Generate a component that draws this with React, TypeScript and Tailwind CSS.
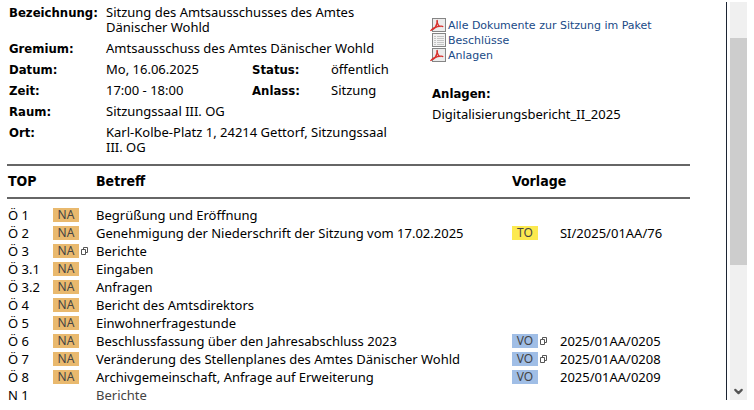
import { ChevronDown } from 'lucide-react';

type BadgeKind = 'NA' | 'TO' | 'VO';

type AgendaItem = {
    top: string;
    betreff: string;
    action?: BadgeKind;
    actionMore?: boolean;
    vorlageKind?: BadgeKind;
    vorlageMore?: boolean;
    vorlage?: string;
    closed?: boolean;
};

const agenda: AgendaItem[] = [
    { top: 'Ö 1', action: 'NA', betreff: 'Begrüßung und Eröffnung' },
    {
        top: 'Ö 2',
        action: 'NA',
        betreff: 'Genehmigung der Niederschrift der Sitzung vom 17.02.2025',
        vorlageKind: 'TO',
        vorlage: 'SI/2025/01AA/76',
    },
    { top: 'Ö 3', action: 'NA', actionMore: true, betreff: 'Berichte' },
    { top: 'Ö 3.1', action: 'NA', betreff: 'Eingaben' },
    { top: 'Ö 3.2', action: 'NA', betreff: 'Anfragen' },
    { top: 'Ö 4', action: 'NA', betreff: 'Bericht des Amtsdirektors' },
    { top: 'Ö 5', action: 'NA', betreff: 'Einwohnerfragestunde' },
    {
        top: 'Ö 6',
        action: 'NA',
        betreff: 'Beschlussfassung über den Jahresabschluss 2023',
        vorlageKind: 'VO',
        vorlageMore: true,
        vorlage: '2025/01AA/0205',
    },
    {
        top: 'Ö 7',
        action: 'NA',
        betreff: 'Veränderung des Stellenplanes des Amtes Dänischer Wohld',
        vorlageKind: 'VO',
        vorlageMore: true,
        vorlage: '2025/01AA/0208',
    },
    {
        top: 'Ö 8',
        action: 'NA',
        betreff: 'Archivgemeinschaft, Anfrage auf Erweiterung',
        vorlageKind: 'VO',
        vorlage: '2025/01AA/0209',
    },
    { top: 'N 1', betreff: 'Berichte', closed: true },
];

const badgeColors: Record<BadgeKind, string> = {
    NA: 'bg-[#e9b96e]',
    TO: 'bg-[#fce94f]',
    VO: 'bg-[#a0bee6]',
};

const PdfIcon = () => (
    <svg width="16" height="15" viewBox="0 0 16 15" aria-hidden="true">
        <rect x="2.5" y="0.5" width="13" height="13" fill="#ececec" stroke="#858585" />
        <path
            d="M7 2C7.6 4 7.2 6.5 5.5 9L3 11.5"
            fill="none"
            stroke="#d8302c"
            strokeWidth="1.5"
        />
        <path
            d="M0.5 13C2 10.8 4.5 9.4 7.5 8.6C9.5 8.1 12.5 7.8 13.2 8.8M7.2 4.5C7.8 6.8 8.6 8 10.4 8.8"
            fill="none"
            stroke="#d8302c"
            strokeWidth="1.2"
        />
    </svg>
);

const ListIcon = () => (
    <svg width="16" height="15" viewBox="0 0 16 15" aria-hidden="true">
        <rect x="2.5" y="0.5" width="13" height="13" fill="#f2f2f2" stroke="#858585" />
        <path
            d="M4 3.5h2M7 3.5h7M4 5.5h2M7 5.5h7M4 7.5h2M7 7.5h7M4 9.5h2M7 9.5h7M4 11.5h2M7 11.5h7"
            stroke="#c4c4c4"
        />
    </svg>
);

const MoreIcon = () => (
    <svg width="7" height="8" viewBox="0 0 7 8" aria-hidden="true">
        <path d="M2.5 2.5V0.5H6.5V5.5H4.5M0.5 2.5H4.5V7.5H0.5Z" fill="none" stroke="#555" />
    </svg>
);

const Badge = ({ kind, more }: { kind: BadgeKind; more?: boolean }) => (
    <div className="flex items-center gap-0.5">
        <a
            href="#"
            className={`${badgeColors[kind]} flex h-3.5 w-[26px] items-center justify-center text-xs text-[#444]`}
        >
            {kind}
        </a>
        {more && (
            <button type="button" aria-label="Weitere anzeigen">
                <MoreIcon />
            </button>
        )}
    </div>
);

const documents = [
    { name: 'Alle Dokumente zur Sitzung im Paket', icon: <PdfIcon /> },
    { name: 'Beschlüsse', icon: <ListIcon /> },
    { name: 'Anlagen', icon: <PdfIcon /> },
];

const App = () => {
    return (
        <div className="flex h-screen bg-white pt-0.5 pb-2.5 pr-[7px] font-['Noto_Sans','DejaVu_Sans',sans-serif] text-[13px] leading-[15px] text-black">
            <main className="min-w-0 flex-1 border-r border-[#1c2433] pr-9 pl-[7px]">
                <div className="flex pt-[3px] pl-0.5">
                    <dl className="grid w-[421px] shrink-0 grid-cols-[97px_146px_79px_1fr] gap-y-1.5 pr-8 [&>dt]:font-['DejaVu_Sans_Condensed','DejaVu_Sans',sans-serif] [&>dt]:font-bold">
                        <dt>Bezeichnung:</dt>
                        <dd className="col-span-3">
                            Sitzung des Amtsausschusses des Amtes Dänischer Wohld
                        </dd>
                        <dt>Gremium:</dt>
                        <dd className="col-span-3">Amtsausschuss des Amtes Dänischer Wohld</dd>
                        <dt>Datum:</dt>
                        <dd>Mo, 16.06.2025</dd>
                        <dt>Status:</dt>
                        <dd>öffentlich</dd>
                        <dt>Zeit:</dt>
                        <dd>17:00 - 18:00</dd>
                        <dt>Anlass:</dt>
                        <dd>Sitzung</dd>
                        <dt>Raum:</dt>
                        <dd className="col-span-3">Sitzungssaal III. OG</dd>
                        <dt>Ort:</dt>
                        <dd className="col-span-3">
                            Karl-Kolbe-Platz 1, 24214 Gettorf, Sitzungssaal III. OG
                        </dd>
                    </dl>
                    <section className="min-w-0 flex-1 pt-[13px]">
                        <ul className="font-['DejaVu_Sans',sans-serif] text-[11px]">
                            {documents.map((doc) => (
                                <li key={doc.name}>
                                    <a href="#" className="flex items-center gap-0.5 text-[#204a87]">
                                        {doc.icon}
                                        {doc.name}
                                    </a>
                                </li>
                            ))}
                        </ul>
                        <h2 className="mt-[23px] mb-1.5 pl-0.5 font-['DejaVu_Sans_Condensed','DejaVu_Sans',sans-serif] font-bold">
                            Anlagen:
                        </h2>
                        <p className="pl-0.5">
                            <a href="#">Digitalisierungsbericht_II_2025</a>
                        </p>
                    </section>
                </div>

                <table className="mt-[9px] w-full table-fixed text-left">
                    <colgroup>
                        <col className="w-[46px]" />
                        <col className="w-[43px]" />
                        <col />
                        <col className="w-12" />
                        <col className="w-[130px]" />
                    </colgroup>
                    <thead className="border-y-2 border-[#666] font-['DejaVu_Sans_Condensed','DejaVu_Sans',sans-serif] text-sm leading-[15px]">
                        <tr className="h-[33px]">
                            <th colSpan={2} className="pl-px">
                                TOP
                            </th>
                            <th>Betreff</th>
                            <th colSpan={2}>Vorlage</th>
                        </tr>
                    </thead>
                    <tbody className="before:block before:h-[7px]">
                        {agenda.map((item) => (
                            <tr key={item.top} className="h-[18px]">
                                <td className="pl-px">{item.top}</td>
                                <td>
                                    {item.action && (
                                        <Badge kind={item.action} more={item.actionMore} />
                                    )}
                                </td>
                                <td className={item.closed ? 'text-[#444]' : ''}>
                                    {item.vorlage ? <a href="#">{item.betreff}</a> : item.betreff}
                                </td>
                                <td>
                                    {item.vorlageKind && (
                                        <Badge kind={item.vorlageKind} more={item.vorlageMore} />
                                    )}
                                </td>
                                <td>{item.vorlage && <a href="#">{item.vorlage}</a>}</td>
                            </tr>
                        ))}
                    </tbody>
                </table>
            </main>

            <div className="ml-[3px] flex w-[17px] flex-col items-center bg-[#f0f0f0]">
                <div className="h-[9%]" />
                <div className="h-[57%] w-full bg-[#cdcdcd]" />
                <button type="button" aria-label="Nach unten" className="mt-auto mb-0.5 text-[#555]">
                    <ChevronDown size={13} strokeWidth={4} />
                </button>
            </div>
        </div>
    );
};

export default App;
